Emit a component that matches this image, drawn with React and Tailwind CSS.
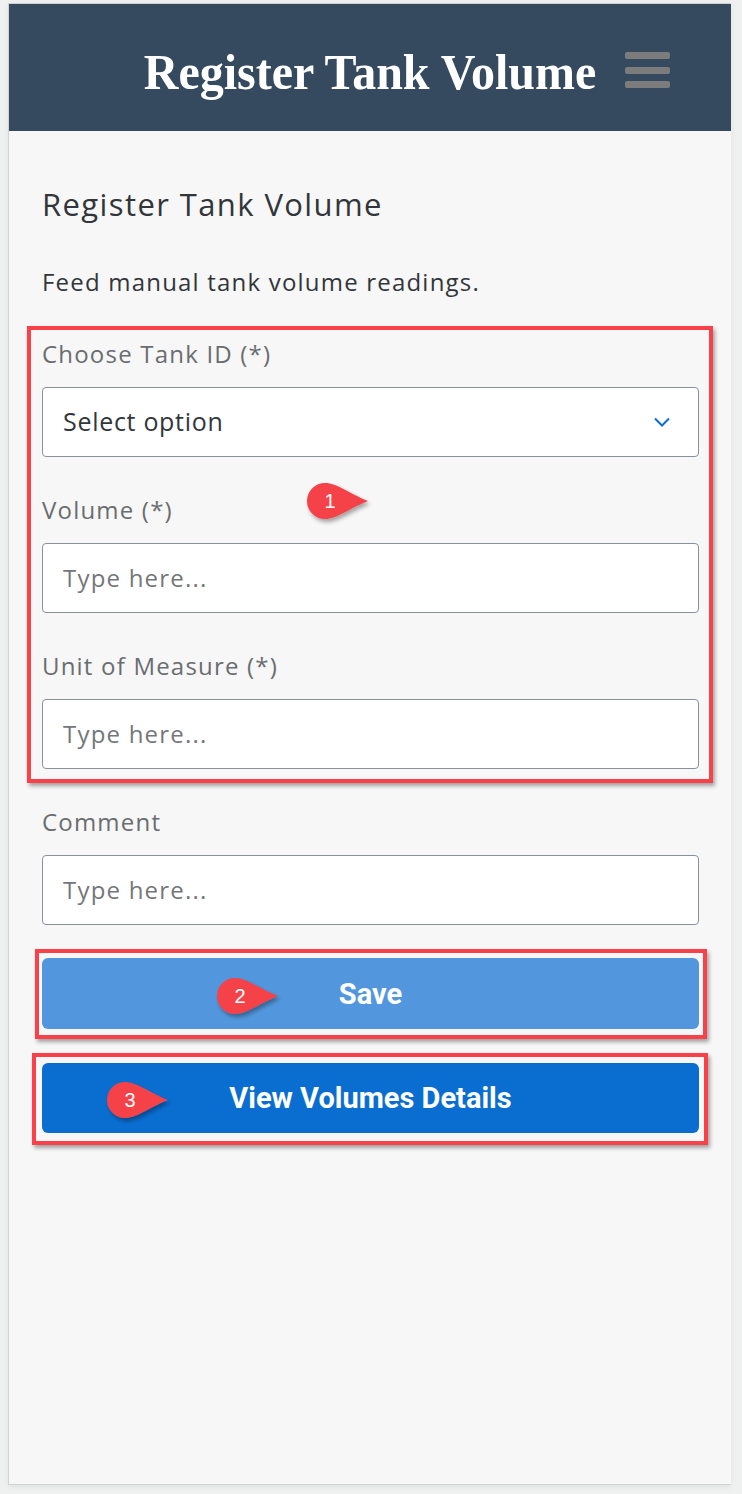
import React from "react";

const font = { fontFamily: "'Open Sans', 'Liberation Sans', sans-serif" };
const btnFont = { fontFamily: "Roboto, 'Liberation Sans', sans-serif" };

function Badge({ n, className }) {
  return (
    <div className={`absolute w-[64px] h-[40px] ${className}`}>
      <svg width="64" height="40" viewBox="0 0 64 40" className="absolute left-0 top-0 overflow-visible">
        <defs>
          <filter id={`sh${n}`} x="-30%" y="-30%" width="160%" height="180%">
            <feDropShadow dx="2" dy="3" stdDeviation="2" floodColor="#000" floodOpacity="0.35" />
          </filter>
        </defs>
        <path
          d="M19 1 C31 1 42 11 62 19 C42 27 31 37 19 37 A18 18 0 0 1 19 1 Z"
          fill="#f5424a"
          filter={`url(#sh${n})`}
        />
      </svg>
      <span
        className="absolute left-[12px] top-0 w-[24px] h-[38px] flex items-center justify-center text-white text-[20px]"
        style={{ fontFamily: "'Liberation Sans', Arial, sans-serif" }}
      >
        {n}
      </span>
    </div>
  );
}

function RedBox({ className }) {
  return (
    <div
      className={`absolute border-[4px] border-[#fa4149] shadow-[2px_3px_4px_rgba(0,0,0,0.35)] pointer-events-none ${className}`}
    />
  );
}

function Field({ label, placeholder }) {
  return (
    <div className="flex flex-col">
      <div className="h-[30px] leading-[30px] text-[24px] tracking-[1.2px] text-[#6a6d70]">{label}</div>
      <div className="mt-[18px] h-[70px] rounded-[4px] border border-[#89919a] bg-white flex items-center px-[20px]">
        <span className="text-[24px] tracking-[1.2px] text-[#74777a]">{placeholder}</span>
      </div>
    </div>
  );
}

export default function App() {
  return (
    <div className="min-h-[1494px] bg-[#eff1f0] pt-[3px] pl-[8px] pr-[11px]" style={font}>
      <div className="w-[723px] h-[1482px] border-l border-t border-b border-[#d2d2d2] bg-[#f7f7f7] shadow-[0_2px_6px_rgba(0,0,0,0.06)]">
        <header className="relative h-[127px] bg-[#354a5f] flex items-center justify-center">
          <h1
            className="text-white font-bold text-[48px] leading-none mt-[8px] scale-y-[1.06]"
            style={{ fontFamily: "'Liberation Serif', 'Times New Roman', serif" }}
          >
            Register Tank Volume
          </h1>
          <div className="absolute right-[61px] top-[48px] flex flex-col gap-[7.5px]">
            <div className="w-[45px] h-[7px] rounded-[2px] bg-[#7c7c7c]" />
            <div className="w-[45px] h-[7px] rounded-[2px] bg-[#7c7c7c]" />
            <div className="w-[45px] h-[7px] rounded-[2px] bg-[#7c7c7c]" />
          </div>
        </header>

        <main className="pl-[33px] pr-[32px]">
          <h2 className="mt-[55px] h-[36px] leading-[36px] text-[31px] tracking-[1.4px] text-[#32363a]">
            Register Tank Volume
          </h2>
          <p className="mt-[45px] h-[30px] leading-[30px] text-[24px] tracking-[1.2px] text-[#32363a]">
            Feed manual tank volume readings.
          </p>

          <div className="relative mt-[42px] flex flex-col gap-[38px]">
            <RedBox className="-top-[13px] -bottom-[14px] -left-[15px] -right-[14px]" />
            <div className="flex flex-col">
              <div className="h-[30px] leading-[30px] text-[24px] tracking-[1.2px] text-[#6a6d70]">Choose Tank ID (*)</div>
              <div className="mt-[18px] h-[70px] rounded-[4px] border border-[#89919a] bg-white flex items-center justify-between pl-[20px] pr-[28px]">
                <span className="text-[25px] tracking-[0.7px] text-[#32363a]">Select option</span>
                <svg width="16" height="10" viewBox="0 0 16 10">
                  <path d="M1 1.5 L8 8.5 L15 1.5" fill="none" stroke="#0a6ed1" strokeWidth="2" />
                </svg>
              </div>
            </div>
            <Field label="Volume (*)" placeholder="Type here..." />
            <Field label="Unit of Measure (*)" placeholder="Type here..." />
            <Badge n="1" className="left-[264px] top-[143px]" />
          </div>

          <div className="mt-[38px]">
            <Field label="Comment" placeholder="Type here..." />
          </div>

          <div className="relative mt-[33px] h-[71px] rounded-[6px] bg-[#5297dd] flex items-center justify-center">
            <RedBox className="-top-[9px] -bottom-[10px] -left-[7px] -right-[8px]" />
            <span className="text-white font-bold text-[29px] mt-[2px]" style={btnFont}>Save</span>
            <Badge n="2" className="left-[174px] top-[19px]" />
          </div>

          <div className="relative mt-[34px] h-[70px] rounded-[6px] bg-[#0a6ed1] flex items-center justify-center">
            <RedBox className="-top-[10px] -bottom-[12px] -left-[10px] -right-[9px]" />
            <span className="text-white font-bold text-[29px] mt-[2px]" style={btnFont}>View Volumes Details</span>
            <Badge n="3" className="left-[64px] top-[18px]" />
          </div>
        </main>
      </div>
    </div>
  );
}
